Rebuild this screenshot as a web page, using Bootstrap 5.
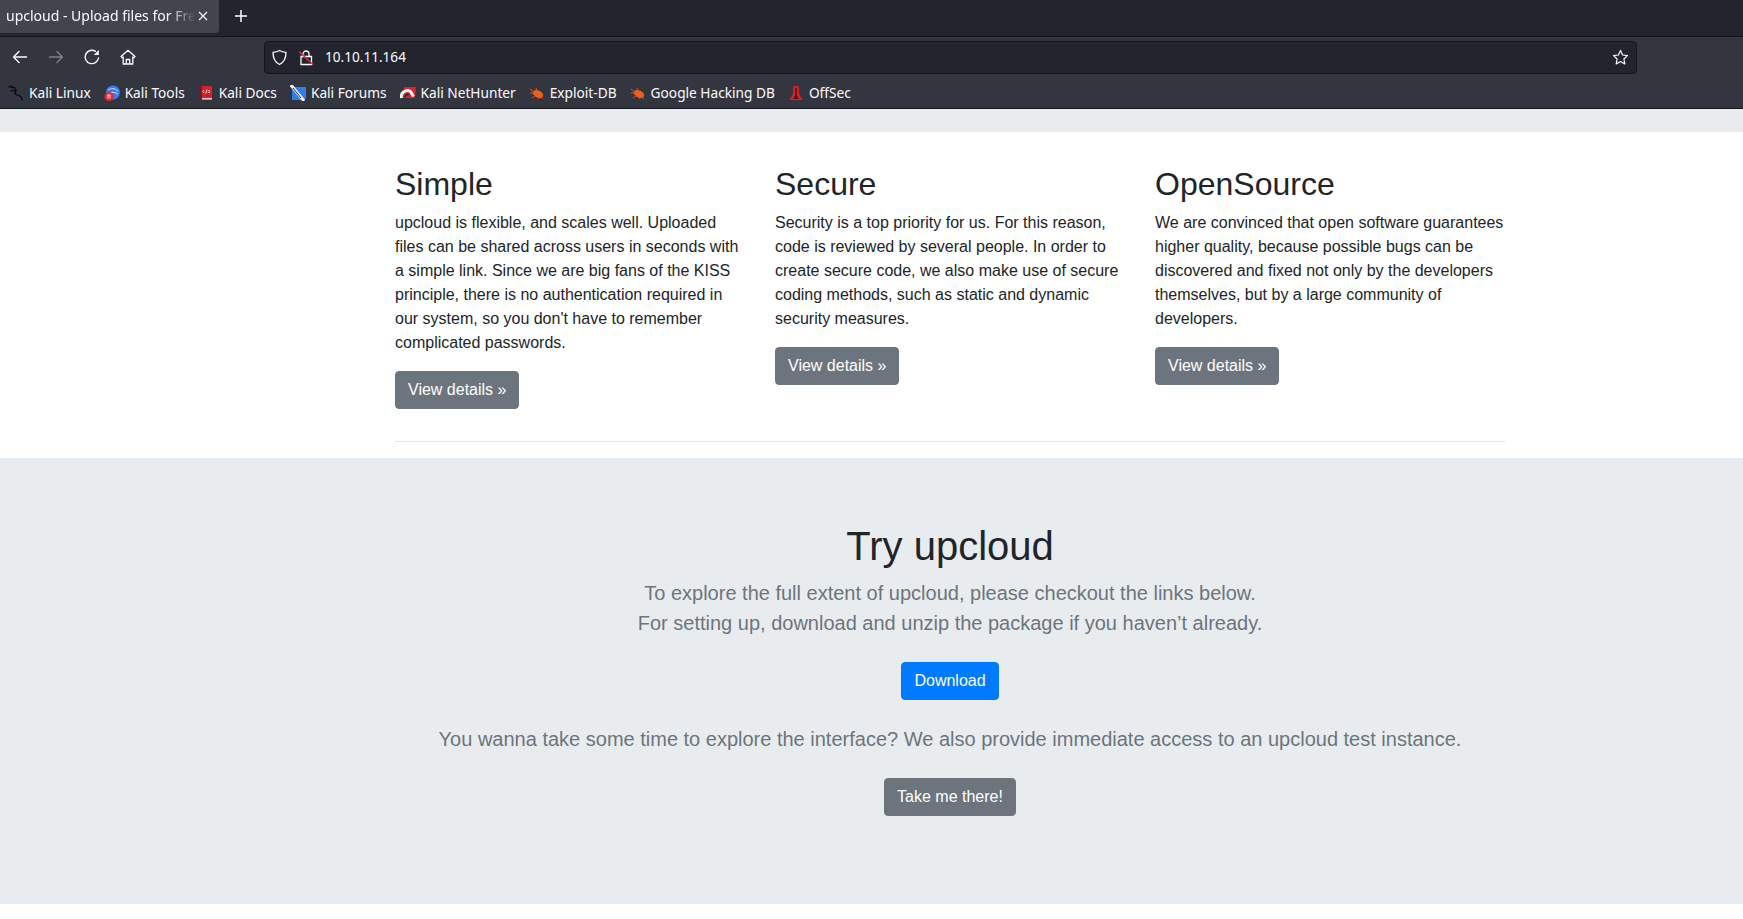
<!DOCTYPE html>
<html lang="en">
<head>
    <meta charset="UTF-8">
    <title>upcloud - Upload files for Free!</title>
    <link rel="stylesheet" href="https://cdn.jsdelivr.net/npm/bootstrap@5.3.0/dist/css/bootstrap.min.css">
    <style>
        html, body { height: 100%; overflow: hidden; }
        body { background: #fff; color: #212529; font-family: "Liberation Sans", Arial, sans-serif; font-size: 16px; line-height: 1.5; }

        /* browser chrome */
        .tabstrip { height: 37px; background: #23252e; border-bottom: 1px solid #14151a; font-family: "Noto Sans", sans-serif; }
        .tab-active { width: 219px; height: 33px; background: #42454e; color: #fbfbfe; border-bottom-right-radius: 4px; font-size: 14px; padding-left: 6px; padding-right: 11px; padding-bottom: 2px; }
        .tab-title { white-space: nowrap; -webkit-mask-image: linear-gradient(to right, #000 85%, transparent); mask-image: linear-gradient(to right, #000 85%, transparent); }
        .newtab { margin-left: 15px; margin-top: 9px; }
        .toolbar { height: 40px; background: #33363f; padding-left: 11px; }
        .tool-ico { width: 18px; height: 18px; margin-right: 18px; flex: none; }
        .urlbar { width: 1373px; height: 33px; margin-left: 109px; background: #23252e; border: 1px solid #14151a; border-radius: 4px; color: #fbfbfe; font-family: "Noto Sans", sans-serif; font-size: 13.6px; padding-left: 6px; padding-right: 7px; }
        .lock-ico { margin-left: 10px; }
        .url-text { margin-left: 11px; }
        .bookmarks { height: 32px; background: #33363f; border-bottom: 1px solid #14151a; font-family: "Noto Sans", sans-serif; font-size: 13.7px; color: #fbfbfe; padding-left: 8px; padding-top: 1px; gap: 13px; }
        .bm-item { gap: 5px; white-space: nowrap; }
        .bm-ico { width: 16px; height: 16px; flex: none; }

        /* page, laid out for the wider 1900px viewport it was captured at */
        .greybar { height: 23px; background: #e9ecef; }
        .wide-box { width: 1140px; margin-left: 380px; padding-left: 15px; padding-right: 15px; }
        .cols-row { margin-left: -15px; margin-right: -15px; --bs-gutter-x: 30px; }
        .cols-row > div { width: 380px; flex: none; }
        .features { padding-top: 33px; background: #fff; }
        .features h2 { font-size: 32px; font-weight: 500; line-height: 1.2; margin-bottom: 8px; }
        .features p { margin-bottom: 16px; }
        .features hr { margin: 16px 0; border: 0; border-top: 1px solid rgba(0,0,0,.1); opacity: 1; }
        .btn-upc { font-size: 16px; padding: 6px 12px; line-height: 24px; border-radius: 4px; border: 1px solid #6c757d; background: #6c757d; color: #fff; }
        .btn-blue { background: #007bff; border-color: #007bff; }
        .try-box { height: 446px; background: #e9ecef; padding-top: 64px; text-align: center; }
        .try-box h1 { font-size: 40px; font-weight: 500; line-height: 48px; margin-bottom: 8px; }
        .try-box .lead { font-size: 20px; font-weight: 300; line-height: 30px; color: #6c757d; margin-bottom: 16px; }
        .try-box p { margin-bottom: 16px; }
    </style>
</head>
<body>
    <div class="tabstrip d-flex align-items-start">
        <div class="tab-active d-flex align-items-center">
            <span class="tab-title">upcloud - Upload files for Fre</span>
            <svg width="10" height="10" viewBox="0 0 10 10" class="ms-auto flex-shrink-0" fill="none" stroke="#fbfbfe" stroke-width="1.2"><path d="M1 1l8 8M9 1l-8 8"/></svg>
        </div>
        <svg class="newtab" width="14" height="14" viewBox="0 0 14 14" fill="none" stroke="#fbfbfe" stroke-width="1.5"><path d="M7 1v12M1 7h12"/></svg>
    </div>

    <div class="toolbar d-flex align-items-center">
        <svg class="tool-ico" viewBox="0 0 18 18" fill="none" stroke="#fbfbfe" stroke-width="1.4" stroke-linecap="round" stroke-linejoin="round"><path d="M15.500 9H2.500M8 3.500L2.500 9 8 14.500"/></svg>
        <svg class="tool-ico" viewBox="0 0 18 18" fill="none" stroke="#7f8187" stroke-width="1.4" stroke-linecap="round" stroke-linejoin="round"><path d="M2.500 9h13M10 3.500L15.500 9 10 14.500"/></svg>
        <svg class="tool-ico" viewBox="0 0 18 18" fill="none" stroke="#fbfbfe" stroke-width="1.4" stroke-linecap="round"><path d="M15.500 10A6.700 6.700 0 1 1 12.500 3.300"/><path d="M15.800 2v5h-5z" fill="#fbfbfe" stroke="none"/></svg>
        <svg class="tool-ico" viewBox="0 0 18 18" fill="none" stroke="#fbfbfe" stroke-width="1.3" stroke-linejoin="round"><path d="M2 8.500L9 2.200l7 6.300-1.300 1.200-.9-.8V16H4.200V8.900l-.9.800z"/><path d="M7.300 16v-4.500h3.400V16"/></svg>
        <div class="urlbar d-flex align-items-center">
            <svg width="17" height="17" viewBox="0 0 17 17" fill="none" stroke="#fbfbfe" stroke-width="1.3" stroke-linejoin="round"><path d="M8.500 1.500C6.500 2.800 4.500 3.200 2 3.300c0 5.500 1.800 10 6.500 12.200C13.200 13.300 15 8.800 15 3.300 12.500 3.200 10.500 2.800 8.500 1.500z"/></svg>
            <svg class="lock-ico" width="16" height="17" viewBox="0 0 16 17" fill="none"><path d="M5 7.500V5a3 3 0 0 1 6 0v2.500M3 7.500h10.500v8H3z" stroke="#fbfbfe" stroke-width="1.300"/><path d="M1 2.500l14 13" stroke="#e22850" stroke-width="1.500"/></svg>
            <span class="url-text">10.10.11.164</span>
            <svg class="ms-auto" width="17" height="17" viewBox="0 0 17 17" fill="none" stroke="#fbfbfe" stroke-width="1.200" stroke-linejoin="round"><path d="M8.500 1.500l2.100 4.500 4.900.6-3.600 3.400.9 4.900-4.300-2.400-4.300 2.400.9-4.900L1.500 6.600l4.900-.6z"/></svg>
        </div>
    </div>

    <div class="bookmarks d-flex align-items-center">
        <span class="bm-item d-flex align-items-center">
            <svg class="bm-ico" viewBox="0 0 16 16" fill="none" stroke="#0b0b0d" stroke-width="1.300" stroke-linecap="round"><path d="M1 2c3-1 6 0 7 3 1 2-2 2-1 4 2 1 5 1 6 3 1 1 1 2 1 3M3 1c1 1 2 2 4 2M3 6c2-1 3-1 4 0"/></svg>
            Kali Linux
        </span>
        <span class="bm-item d-flex align-items-center">
            <svg class="bm-ico" viewBox="0 0 16 16"><circle cx="9" cy="7.500" r="7" fill="#367bf0"/><path d="M4 5c3-2 7-2 10 1M6 8c2-1 5-1 8 1" fill="none" stroke="#cfe0ff" stroke-width="1"/><circle cx="5" cy="11.500" r="4.500" fill="#e8262b"/><path d="M3.500 10h3M4 10v3.500M6 10v3.500" stroke="#fff" stroke-width=".9"/></svg>
            Kali Tools
        </span>
        <span class="bm-item d-flex align-items-center">
            <svg class="bm-ico" viewBox="0 0 16 16"><rect x="2" y="1" width="12" height="14" rx="1" fill="#d5202a"/><rect x="2" y="1" width="2" height="14" fill="#6d1c35"/><path d="M6 5L4.800 6.500 6 8M10.500 5l1.200 1.500L10.500 8M9 4.500L7.800 8.500" stroke="#fff" stroke-width=".9" fill="none"/><rect x="4" y="13" width="10" height="1.500" fill="#f2d6d6"/></svg>
            Kali Docs
        </span>
        <span class="bm-item d-flex align-items-center">
            <svg class="bm-ico" viewBox="0 0 16 16"><path d="M2 2h14v11l-2 2H2z" fill="#2f80ed"/><path d="M1 0l13 16" stroke="#f1f3f6" stroke-width="3"/><path d="M3 3l8 10" stroke="#23252e" stroke-width="1"/></svg>
            Kali Forums
        </span>
        <span class="bm-item d-flex align-items-center">
            <svg class="bm-ico" viewBox="0 0 16 16"><path d="M4 2h12l-1 11H3z" fill="#d9232e"/><path d="M1.500 13a6 6 0 0 1 9-6.500l3 5" fill="none" stroke="#f4f4f4" stroke-width="3"/><path d="M5 12.500a3 3 0 0 1 4-3" fill="none" stroke="#26262c" stroke-width="1.500"/></svg>
            Kali NetHunter
        </span>
        <span class="bm-item d-flex align-items-center">
            <svg class="bm-ico" viewBox="0 0 16 16"><ellipse cx="9" cy="9" rx="5.500" ry="3.500" fill="#ec5e1c" transform="rotate(25 9 9)"/><path d="M1 4l4 3M1 8h4M3 13l3-2M7 3l1 3M10 14l-1-2M14 14l-2-2" stroke="#d65a20" stroke-width="1"/></svg>
            Exploit-DB
        </span>
        <span class="bm-item d-flex align-items-center">
            <svg class="bm-ico" viewBox="0 0 16 16"><ellipse cx="9" cy="9" rx="5.500" ry="3.500" fill="#ec5e1c" transform="rotate(25 9 9)"/><path d="M1 4l4 3M1 8h4M3 13l3-2M7 3l1 3M10 14l-1-2M14 14l-2-2" stroke="#d65a20" stroke-width="1"/></svg>
            Google Hacking DB
        </span>
        <span class="bm-item d-flex align-items-center">
            <svg class="bm-ico" viewBox="0 0 16 16"><path d="M5.500 1h5l.6 8 3.400 6H1.500l3.400-6z" fill="#d8222a"/><path d="M7.200 3h1.600v7l2 4H5.200l2-4z" fill="#5a0d12"/></svg>
            OffSec
        </span>
    </div>

    <div class="greybar"></div>

    <div class="features">
        <div class="wide-box">
            <div class="row cols-row">
                <div>
                    <h2>Simple</h2>
                    <p>upcloud is flexible, and scales well. Uploaded files can be shared across users in seconds with a simple link. Since we are big fans of the KISS principle, there is no authentication required in our system, so you don't have to remember complicated passwords.</p>
                    <p><a class="btn btn-upc" href="#" role="button">View details »</a></p>
                </div>
                <div>
                    <h2>Secure</h2>
                    <p>Security is a top priority for us. For this reason, code is reviewed by several people. In order to create secure code, we also make use of secure coding methods, such as static and dynamic security measures.</p>
                    <p><a class="btn btn-upc" href="#" role="button">View details »</a></p>
                </div>
                <div>
                    <h2>OpenSource</h2>
                    <p>We are convinced that open software guarantees higher quality, because possible bugs can be discovered and fixed not only by the developers themselves, but by a large community of developers.</p>
                    <p><a class="btn btn-upc" href="#" role="button">View details »</a></p>
                </div>
            </div>
            <hr>
        </div>
    </div>

    <section class="try-box">
        <div class="wide-box">
            <h1>Try upcloud</h1>
            <p class="lead">To explore the full extent of upcloud, please checkout the links below.<br>For setting up, download and unzip the package if you haven’t already.</p>
            <p><a href="#" class="btn btn-upc btn-blue my-2">Download</a></p>
            <p class="lead">You wanna take some time to explore the interface? We also provide immediate access to an upcloud test instance.</p>
            <p><a href="#" class="btn btn-upc my-2">Take me there!</a></p>
        </div>
    </section>

    <script src="https://cdn.jsdelivr.net/npm/bootstrap@5.3.0/dist/js/bootstrap.bundle.min.js"></script>
</body>
</html>
